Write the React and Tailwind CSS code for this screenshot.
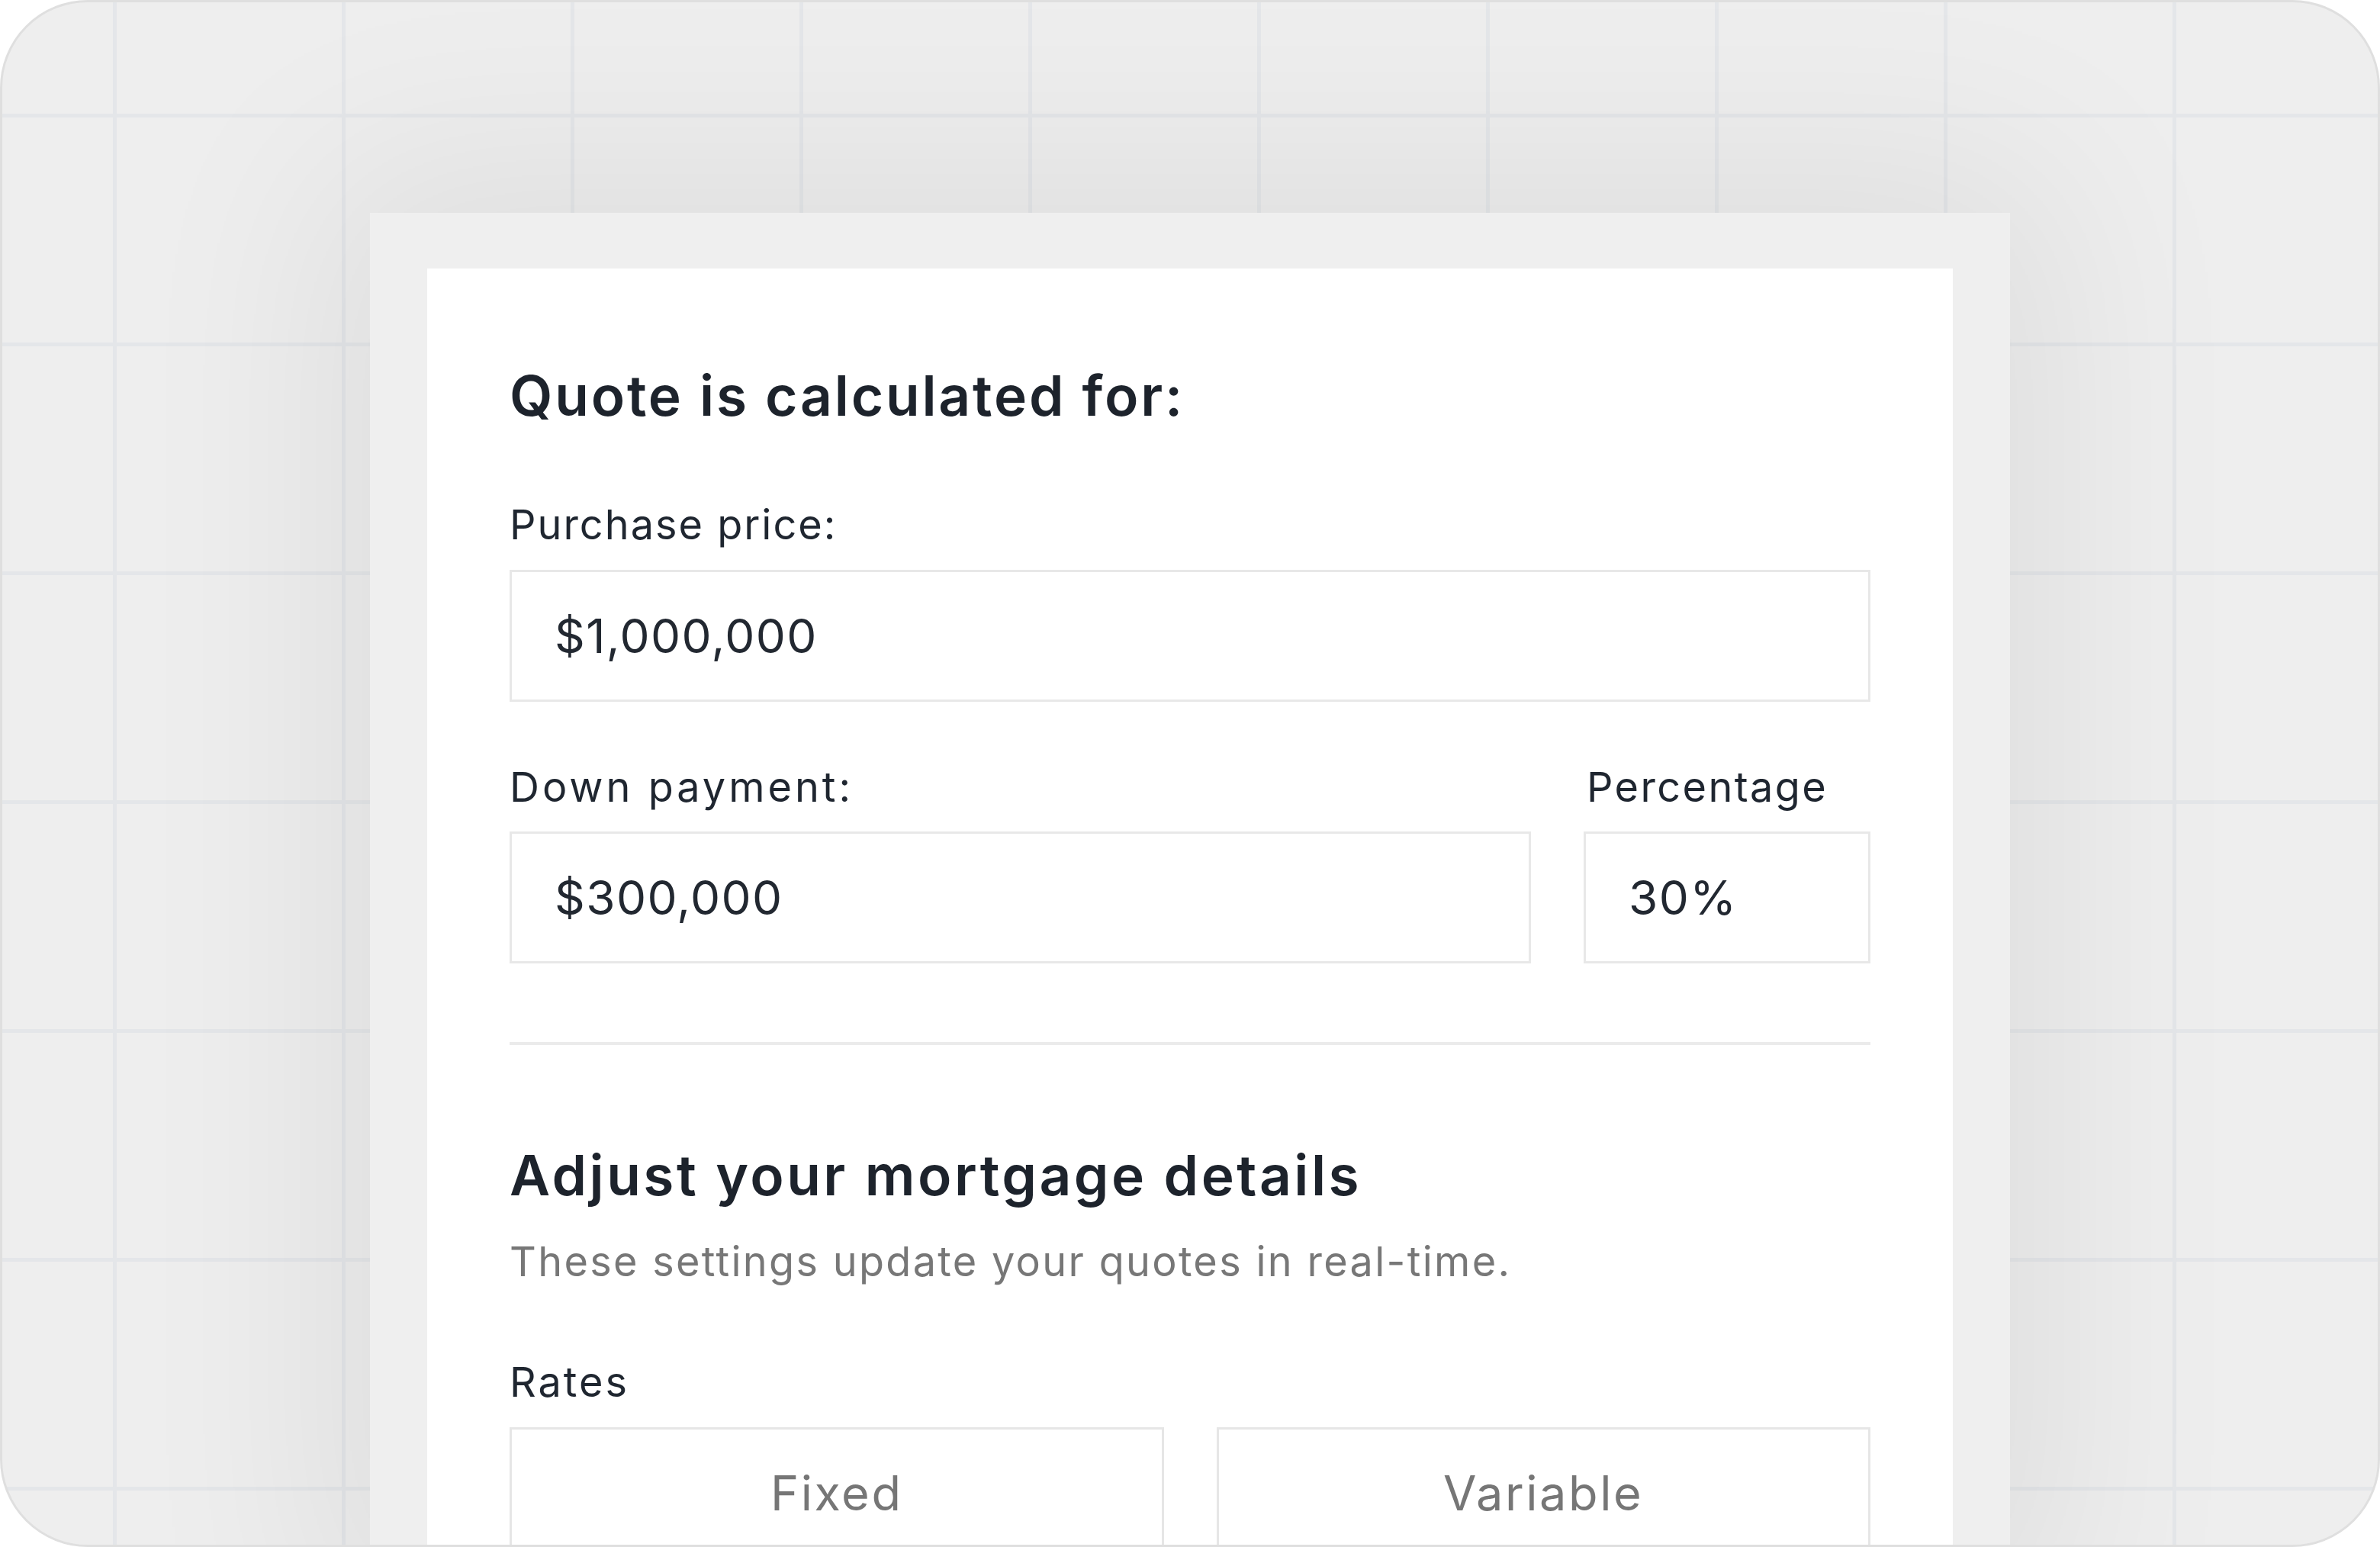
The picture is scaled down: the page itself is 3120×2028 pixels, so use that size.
import React from "react";

const font = { fontFamily: "Inter, 'Noto Sans', sans-serif" };

function Label({ children, className = "" }) {
  return (
    <div className={"text-[54px] leading-none text-[#1f2630] h-[54px] whitespace-nowrap " + className}>
      {children}
    </div>
  );
}

function Field({ value }) {
  return (
    <div className="h-[173px] border-[3px] border-[#e8e8e8] bg-white flex items-center pl-[56px]">
      <span className="text-[62px] leading-none tracking-[1.4px] text-[#222831]">{value}</span>
    </div>
  );
}

function Choice({ label }) {
  return (
    <div className="h-[173px] border-[3px] border-[#e6e6e6] bg-white flex items-center justify-center">
      <span className="text-[63px] leading-none tracking-[2.6px] text-[#767676]">{label}</span>
    </div>
  );
}

export default function App() {
  return (
    <div className="w-[3120px] h-[2028px] bg-white" style={font}>
      <div className="w-full h-full rounded-[115px] border-[3px] border-[#dfdfdf] overflow-hidden bg-[#eeeeee] bg-[linear-gradient(to_right,#e4e6e9_5px,transparent_5px),linear-gradient(to_bottom,#e4e6e9_5px,transparent_5px)] bg-[size:300px_300px] bg-[position:145px_146px] flex justify-center pt-[276px]">
        <div className="w-[2150px] shrink-0 bg-[#efefef] px-[75px] pt-[73px] shadow-[0_0_320px_60px_rgba(0,0,0,0.065)] h-[1800px]">
          <div className="bg-white px-[108px] pt-[130px] h-full">
            <h1 className="text-[73px] leading-none font-semibold tracking-[2.8px] text-[#1d232c] h-[73px] whitespace-nowrap">
              Quote is calculated for:
            </h1>

            <Label className="mt-[106px] tracking-[2px]">Purchase price:</Label>
            <div className="mt-[32px]">
              <Field value="$1,000,000" />
            </div>

            <div className="mt-[85px] grid grid-cols-[1fr_376px] gap-x-[69px]">
              <div>
                <Label className="tracking-[4px]">Down payment:</Label>
                <div className="mt-[31px]">
                  <Field value="$300,000" />
                </div>
              </div>
              <div>
                <Label className="pl-[4px] tracking-[2.4px]">Percentage</Label>
                <div className="mt-[31px]">
                  <Field value="30%" />
                </div>
              </div>
            </div>

            <div className="mt-[103px] h-[4px] bg-[#ebebeb]" />

            <h2 className="mt-[134px] text-[73px] leading-none font-semibold tracking-[3.5px] text-[#1d232c] h-[73px] whitespace-nowrap">
              Adjust your mortgage details
            </h2>
            <div className="mt-[50px] text-[54px] leading-none tracking-[2.3px] text-[#777777] h-[54px] whitespace-nowrap">
              These settings update your quotes in real-time.
            </div>

            <Label className="mt-[104px] tracking-[3px]">Rates</Label>
            <div className="mt-[32px] grid grid-cols-2 gap-x-[69px]">
              <Choice label="Fixed" />
              <Choice label="Variable" />
            </div>
          </div>
        </div>
      </div>
    </div>
  );
}
